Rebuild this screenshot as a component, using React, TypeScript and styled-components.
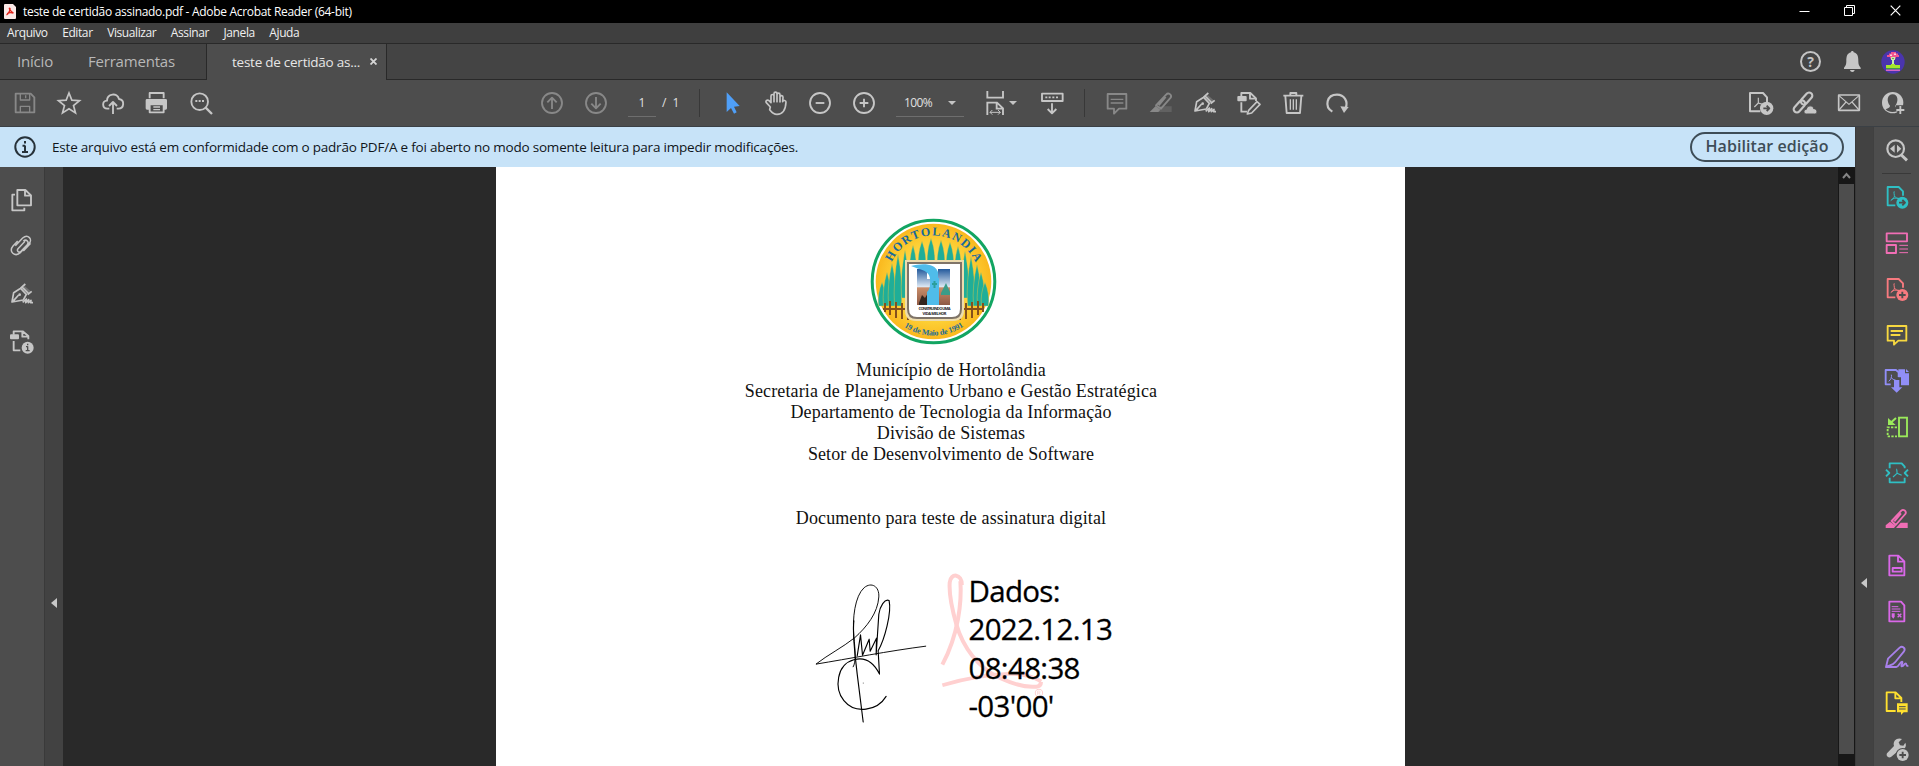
import React from 'react';
import styled, { createGlobalStyle } from 'styled-components';

const GlobalStyle = createGlobalStyle`
  * { box-sizing: border-box; }
  body { margin: 0; background: #292929; font-family: 'Open Sans', 'Noto Sans', sans-serif; }
`;

/* ---------- icons, all drawn on a 72-unit grid ---------- */

const Glyph = styled.svg<{ $color?: string }>`
  display: block;
  flex: none;
  width: 24px;
  height: 24px;
  color: ${(p) => p.$color ?? '#c6c6c6'};
  fill: none;
  stroke: currentColor;
  stroke-width: 5.600;
  stroke-linejoin: round;
  overflow: visible;
`;

const solid = { fill: 'currentColor', stroke: 'none' } as const;
const PANEL = '#4d4d4d';

const PdfMark = () => (
  <path d="M28 19c-3 0 1 12 0 16-2 5-6 9-11 12M28 33c4 5 8 8 14 8M19 44c6-4 13-6 23-4" strokeWidth="3" />
);

const icons: Record<string, React.ReactNode> = {
  save: (
    <>
      <path d="M8 8h45l11 11v45H8z" />
      <path d="M22 8v19h28V8M38 13v9M22 64V46h28v18" strokeWidth="4" />
    </>
  ),
  star: <path d="M36 6l8.500 21.500 23 1.500-18 14.500 6 22.500L36 53.500 16.500 66l6-22.500-18-14.500 23-1.500z" strokeLinejoin="miter" strokeWidth="5" />,
  cloud: (
    <>
      <path d="M25 53h-6c-16-1-17-23-1-24 0-21 31-26 36-5 18 3 16 28-2 29h-5" />
      <path d="M36 69V35M24 45l12-12 12 12" />
    </>
  ),
  print: (
    <g transform="translate(-2 0)">
      <path d="M16 22V6h42v16" />
      <path d="M8 24h56q4 0 4 4v24q0 4-4 4h-5V42H15v14H8q-4 0-4-4V28q0-4 4-4z" {...solid} />
      <path d="M16 40h42v24H16z" />
      <path d="M27 48h20M27 56h20" strokeWidth="4" />
    </g>
  ),
  find: (
    <>
      <circle cx="32" cy="32" r="25" />
      <path d="M50 50l19 19" strokeWidth="7" />
      <path d="M19 30h6M29 30h6M39 30h6" strokeWidth="6" />
    </>
  ),
  up: (
    <>
      <circle cx="36" cy="36" r="30" />
      <path d="M36 54V21M22 34l14-14 14 14" />
    </>
  ),
  down: (
    <>
      <circle cx="36" cy="36" r="30" />
      <path d="M36 18v33M22 38l14 14 14-14" />
    </>
  ),
  cursor: <path d="M20 4v59l13-12 9 17 8-4-8-17 17-2z" {...solid} />,
  hand: <path d="M19 48L7 35c-4-5 3-10 8-6l6 6V15c0-6 9-6 9 0v17V8c0-6 9-6 9 0v24-21c0-6 9-6 9 0v22-15c1-6 9-5 9 1l-1 13c1-5 10-5 10 1-1 22-7 37-27 37-12 0-16-6-22-14z" strokeWidth="5" />,
  minus: (
    <>
      <circle cx="36" cy="36" r="30" />
      <path d="M23 36h26" />
    </>
  ),
  plus: (
    <>
      <circle cx="36" cy="36" r="30" />
      <path d="M23 36h26M36 23v26" />
    </>
  ),
  fit: (
    <g strokeLinejoin="miter">
      <path d="M13 0v20h47V0M13 72V35h29l18 17v20M41 35v18h18" />
      <path d="M21 64h31M28 57l-7 7 7 7M45 57l7 7-7 7" strokeWidth="3" />
    </g>
  ),
  keys: (
    <>
      <rect x="6" y="8" width="62" height="22" />
      <path d="M16 19h6M26 19h6M37 19h6M48 19h6" />
      <path d="M36 37v30M23 54l13 13 13-13" />
    </>
  ),
  comment: (
    <>
      <path d="M8 9h56v44H42L27 68V53H8z" />
      <path d="M17 25h38M17 36h38" strokeWidth="4" />
    </>
  ),
  marker: (
    <>
      <path d="M26 46h42v17H12z" {...solid} opacity=".35" />
      <path d="M21 43L52 10c6-7 18 2 13 10L36 53zM50 18L29 43" />
      <path d="M20 45l14 11-6 7H2z" {...solid} />
    </>
  ),
  pen: (
    <>
      <path d="M6 60l5-28 21-13 17 18-9 17zM8 59l18-20M35 14l22 22M31 19l15-13M53 38l12-10" strokeWidth="5" />
      <path d="M44 12l18 16-7 8-16-18z" {...solid} opacity=".3" />
      <circle cx="29" cy="38" r="4" {...solid} />
      <path d="M38 61l11-10-2 11 9-9-1 9 8-7-1 7h7" strokeWidth="5" />
    </>
  ),
  editDoc: (
    <>
      <path d="M13 17V6h27l17 16v8M39 7v16h17M13 34v28h17" />
      <rect x="1" y="15" width="28" height="16" rx="3" {...solid} />
      <path d="M35 58l25-26 9 8-25 26-13 3z" strokeWidth="5" />
    </>
  ),
  trash: (
    <g transform="translate(1 0)">
      <path d="M6 14h60M27 13V6h18v7M12 15l4 51h40l4-51" />
      <path d="M27 25v31M36 25v31M45 25v31" strokeWidth="4" />
    </g>
  ),
  rotate: (
    <>
      <path d="M22 62C-3 47 5 11 36 11c22 0 34 20 26 40" strokeWidth="6.500" />
      <path d="M46 46l25 2-14 18z" {...solid} />
    </>
  ),
  exportGray: (
    <>
      <path d="M34 61H3V6h39l12 13v15" strokeWidth="6" />
      <path d="M28 20v16L16 48M28 36l15 5" strokeWidth="3.500" />
      <circle cx="53" cy="52" r="20" {...solid} />
      <path d="M43 52h16M53 44l8 8-8 8" stroke={PANEL} />
    </>
  ),
  link: (
    <>
      <g transform="rotate(-48 31 34)" strokeWidth="6.500">
        <rect x="-7" y="24" width="42" height="19" rx="9.500" />
        <rect x="25" y="24" width="42" height="19" rx="9.500" />
      </g>
      <path d="M40 69c-9 0-10-13 0-14 2-13 20-14 22-2 12 0 13 16 3 16z" fill="currentColor" stroke={PANEL} strokeWidth="3" />
    </>
  ),
  mail: (
    <>
      <rect x="5" y="12" width="62" height="46" strokeWidth="5" />
      <path d="M6 14l30 26 30-26M6 57l21-24M66 57L45 33" strokeWidth="3.500" />
    </>
  ),
  addUser: (
    <>
      <circle cx="35" cy="35" r="32" {...solid} />
      <path d="M35 10c17 0 18 22 8 34 0 6 5 7 12 11-9 11-32 11-41 0 8-4 13-5 13-11C16 32 18 10 35 10z" fill={PANEL} stroke="none" />
      <path d="M45 43h27v29H49V61H38V51h7z" fill={PANEL} stroke="none" />
      <path d="M46 57h24M58 45v24" />
    </>
  ),
  bell: <path d="M33 7c0-5 8-5 8 0 12 3 14 13 14 27 0 9 2 14 7 19v4H12v-4c5-5 7-10 7-19C19 20 21 10 33 7zM30 60h14c-1 8-13 8-14 0z" {...solid} />,
  zoomSide: (
    <>
      <circle cx="32" cy="32" r="25" strokeWidth="6.500" />
      <path d="M49 51l17 16" strokeWidth="9" />
      <path d="M29 20v24L15 32zM36 20v24l13-12z" {...solid} />
    </>
  ),
  exportPdf: (
    <>
      <path d="M31 61H8V6h33l13 13v13" />
      <PdfMark />
      <circle cx="52" cy="53" r="18" {...solid} />
      <path d="M42 53h17M52 45l8 8-8 8" stroke={PANEL} />
    </>
  ),
  editPdf: (
    <>
      <rect x="5" y="7" width="61" height="24" />
      <rect x="5" y="42" width="28" height="24" />
      <path d="M43 43h26M43 54h26M43 65h26" strokeWidth="3" />
    </>
  ),
  createPdf: (
    <>
      <path d="M31 61H8V6h33l13 13v13" />
      <PdfMark />
      <circle cx="52" cy="54" r="18" {...solid} />
      <path d="M42 54h20M52 44v20" stroke={PANEL} />
    </>
  ),
  note: (
    <>
      <path d="M8 9h56v44H40L27 65V53H8z" />
      <path d="M17 24h37M17 36h29" />
    </>
  ),
  combine: (
    <>
      <path d="M17 46H2V3h31l8 7v14" />
      <path d="M11 37c7-5 10-13 8-20M19 26c4 5 7 7 12 6" strokeWidth="3" />
      <path d="M40 1h20v12h12v36H48V25h-8z" {...solid} />
      <path d="M63 0l9 9h-9z" {...solid} />
      <path d="M27 33h16v22h9L35 71 18 55h9z" {...solid} />
    </>
  ),
  organize: (
    <g strokeLinejoin="miter">
      <rect x="42" y="8" width="24" height="56" />
      <path d="M36 37H8v27h28" strokeDasharray="7 4" />
      <path d="M33 9L17 23" strokeWidth="6" />
      <path d="M9 9v21h23z" {...solid} />
    </g>
  ),
  compress: (
    <>
      <path d="M14 22V7h36l9 10v5M14 50v14h45V50" />
      <path d="M3 26l10 10L3 46M69 26L59 36l10 10" />
      <path d="M36 24c-2 0 1 10 0 13l-12 11M36 37l14 6" strokeWidth="3.500" />
    </>
  ),
  highlight: (
    <>
      <path d="M33 63l14-16h21v16z" {...solid} />
      <path d="M20 42L49 11c6-6 17 2 12 10L32 54zM48 19L28 43" />
      <path d="M15 44l17 13-5 6H2v-8z" {...solid} />
    </>
  ),
  form: (
    <>
      <path d="M13 8h27l18 17v42H13zM39 9v17h18" />
      <rect x="23" y="45" width="27" height="11" />
    </>
  ),
  request: (
    <>
      <path d="M13 8h35l10 11v48H13z" />
      <path d="M20 23h20M20 30h26M20 37h26" strokeWidth="3" />
      <path d="M20 43h9v10l-4 6-5-6z" {...solid} />
      <path d="M38 44l11 11M49 44L38 55" strokeWidth="4" />
    </>
  ),
  sign: (
    <path d="M3 66l6-25L44 8c8-7 19 2 13 11L31 51c-6 9-18 10-28 15zM4 66h30c7 0 12-17 17-16 5 1-6 14 0 14s6-9 11-9c4 0-1 8 8 8" />
  ),
  sendComment: (
    <>
      <path d="M32 60H5V4h27l17 17v12M31 5v17h17" />
      <path d="M36 37h32v27H56l-8 8v-8H36z" {...solid} />
      <path d="M42 47h20M42 54h20" stroke={PANEL} strokeWidth="3" />
    </>
  ),
  moreTools: (
    <>
      <path d="M6 49l21-22C22 10 38 0 51 6L41 16l4 9 10 1 6-9c6 13-5 24-18 22L18 60C10 65 2 56 6 49z" {...solid} />
      <circle cx="53" cy="54" r="21" fill={PANEL} stroke="none" />
      <circle cx="53" cy="54" r="18" {...solid} />
      <path d="M43 54h20M53 44v20" stroke={PANEL} />
    </>
  ),
  pages: (
    <>
      <path d="M22 6h24l17 16v30H22zM45 7v16h17" />
      <path d="M15 20H7v47h36v-8" />
    </>
  ),
  clip: <path transform="translate(-1 -5)" d="M17 37l22-23c16-14 32 5 18 18L33 57C16 73-5 55 10 38l14-15M41 53l22-23M46 24L25 46c-5 8 3 13 9 8l18-19c8-9-2-19-11-12" strokeWidth="4.500" />,
  docInfo: (
    <>
      <path d="M11 14V4h27l17 14v10M37 5v15h17M11 33v28h20" />
      <rect x="0" y="13" width="27" height="15" rx="3" {...solid} />
      <circle cx="53" cy="53" r="18" {...solid} />
      <path d="M53 49v13M48 50h5M47 62h12M53 41v5" stroke={PANEL} strokeWidth="4" />
    </>
  ),
};

const Icon = ({ name, color }: { name: string; color?: string }) => (
  <Glyph viewBox="0 0 72 72" $color={color} aria-hidden="true">
    {icons[name]}
  </Glyph>
);

/* ---------- window chrome ---------- */

const Window = styled.div`
  display: flex;
  flex-direction: column;
  width: 1919px;
  height: 766px;
  overflow: hidden;
  background: #292929;
`;

const TitleBar = styled.header`
  display: flex;
  align-items: center;
  height: 23px;
  flex: none;
  padding-left: 4px;
  background: #000;
  color: #fff;
`;

const Title = styled.h1`
  margin: 1px 0 0 7px;
  font-size: 12px;
  font-weight: 400;
  line-height: 18px;
  letter-spacing: -0.3px;
`;

const WindowControls = styled.div`
  display: flex;
  margin-left: auto;
  margin-bottom: 3px;
  padding-right: 1px;
`;

const WindowButton = styled.div`
  display: flex;
  justify-content: center;
  width: 45.500px;
`;

const WindowGlyph = styled.svg`
  display: block;
  width: 11px;
  height: 11px;
  fill: none;
  stroke: #fff;
`;

const MenuBar = styled.nav`
  display: flex;
  flex: none;
  gap: 14.500px;
  height: 21px;
  padding: 1px 0 0 7px;
  border-bottom: 1px solid #292929;
  background: #3f3f3f;
  color: #f0f0f0;
  font-size: 12px;
  line-height: 18px;
  letter-spacing: -0.4px;
`;

const TabBar = styled.div`
  display: flex;
  flex: none;
  height: 36px;
  background: #444;
`;

const Tabs = styled.div`
  display: flex;
  gap: 35px;
  width: 207px;
  padding: 6px 0 0 17px;
  border-right: 1px solid #292929;
  border-bottom: 1px solid #292929;
  color: #b8b8b8;
  font-size: 15px;
  line-height: 22px;
  letter-spacing: -0.2px;
`;

const ActiveTab = styled.div`
  display: flex;
  width: 180px;
  padding: 8px 0 0 25px;
  border-right: 1px solid #292929;
  background: ${PANEL};
  color: #e6e6e6;
  font-size: 13.500px;
  line-height: 21px;
  letter-spacing: -0.25px;
`;

const TabClose = styled.svg`
  width: 7px;
  height: 7px;
  margin: 6px 0 0 10px;
  stroke: #d4d4d4;
  stroke-width: 1.800;
`;

const Account = styled.div`
  display: flex;
  flex: 1;
  align-items: center;
  justify-content: flex-end;
  gap: 17px;
  padding: 0 14px 0 0;
  border-bottom: 1px solid #292929;
`;

const Help = styled.span`
  display: flex;
  align-items: center;
  justify-content: center;
  width: 21px;
  height: 21px;
  margin-right: 2px;
  border: 2px solid #c4c4c4;
  border-radius: 50%;
  color: #c4c4c4;
  font-size: 14px;
  font-weight: 700;
  line-height: 17px;
`;

const ToolBar = styled.div`
  display: flex;
  flex: none;
  align-items: center;
  height: 47px;
  padding: 0 4px 0 3px;
  border-bottom: 1px solid #3b4045;
  background: ${PANEL};
  color: #e0e0e0;
  font-size: 12px;
`;

const ToolGroup = styled.div<{ $left?: number; $push?: boolean }>`
  display: flex;
  align-items: center;
  margin-left: ${(p) => (p.$push ? 'auto' : `${p.$left ?? 0}px`)};
`;

const ToolButton = styled.div<{ $drop?: boolean }>`
  display: flex;
  align-items: center;
  justify-content: ${(p) => (p.$drop ? 'flex-start' : 'center')};
  gap: 2px;
  width: ${(p) => (p.$drop ? 57 : 44)}px;
  padding-left: ${(p) => (p.$drop ? 10 : 0)}px;
  height: 44px;
`;

const Divider = styled.i`
  width: 1px;
  height: 28px;
  background: #383838;
`;

const PageField = styled.div`
  width: 28px;
  margin-left: 10px;
  height: 28px;
  border-bottom: 1px solid #6e6e6e;
  line-height: 27px;
  text-align: center;
`;

const PageTotal = styled.span`
  width: 37px;
  margin-left: 6px;
  word-spacing: 3px;
  line-height: 26px;
`;

const ZoomField = styled.div`
  display: flex;
  align-items: center;
  justify-content: space-between;
  width: 68px;
  height: 28px;
  margin: 0 9px 0 10px;
  padding: 0 8px;
  border-bottom: 1px solid #6e6e6e;
  letter-spacing: -0.6px;
`;

const Caret = styled.i`
  border: 4px solid transparent;
  border-top-color: #c4c4c4;
  border-bottom: 0;
`;

/* ---------- body ---------- */

const Body = styled.div`
  display: flex;
  flex: 1;
  min-height: 0;
`;

const Main = styled.div`
  display: flex;
  flex-direction: column;
  width: 1855px;
`;

const Notice = styled.div`
  display: flex;
  align-items: center;
  flex: none;
  height: 40px;
  padding: 0 11px 0 14px;
  background: #c7e3f8;
  color: #10151a;
`;

const NoticeText = styled.p`
  flex: 1;
  margin: 0 0 1px 16px;
  font-size: 13.500px;
  letter-spacing: -0.204px;
`;

const InfoGlyph = styled.svg`
  width: 22px;
  height: 22px;
  fill: none;
  stroke: #27323a;
  stroke-width: 2;
`;

const EnableButton = styled.button`
  width: 154px;
  height: 30px;
  padding: 0 0 2px;
  border: 2px solid #3e4d57;
  border-radius: 15px;
  background: transparent;
  color: #3e4d57;
  font: 600 16px/24px 'Open Sans', sans-serif;
  letter-spacing: 0.07px;
`;

const Workspace = styled.div`
  display: flex;
  flex: 1;
  min-height: 0;
`;

const LeftRail = styled.aside`
  width: 44px;
  padding-top: 9px;
  background: ${PANEL};
`;

const RailButton = styled.div`
  display: flex;
  align-items: center;
  justify-content: center;
  height: 47.300px;
`;

const Strip = styled.div<{ $width: number; $top: number }>`
  display: flex;
  align-items: flex-start;
  justify-content: center;
  width: ${(p) => p.$width}px;
  padding-top: ${(p) => p.$top}px;
  padding-right: 1px;
  border-left: 1px solid #3a3a3a;
  background: #424242;
`;

const Collapse = styled.i`
  border: 5.500px solid transparent;
  border-right: 6px solid #c8c8c8;
  border-left: 0;
`;

const Canvas = styled.main`
  display: flex;
  justify-content: center;
  flex: 1;
  overflow: hidden;
  background: #292929;
`;

const ScrollBar = styled.div`
  display: flex;
  flex-direction: column;
  width: 17px;
  padding: 0 1px;
  background: #171717;
`;

const ScrollUp = styled.svg`
  flex: none;
  width: 15px;
  height: 17px;
  fill: none;
  stroke: #858585;
  stroke-width: 2;
`;

const Thumb = styled.div`
  height: 570px;
  background: ${PANEL};
`;

const ToolRail = styled.aside`
  width: 46px;
  border-left: 1px solid #404040;
  background: ${PANEL};
`;

const RailTool = styled.div`
  display: flex;
  align-items: center;
  justify-content: center;
  height: 46px;
`;

const RailRule = styled.i`
  display: block;
  width: 29px;
  height: 1px;
  margin-left: 8px;
  background: #393939;
`;

/* ---------- document ---------- */

const Page = styled.article`
  flex: none;
  width: 909px;
  height: 640px;
  margin-left: -1px;
  padding-top: 51px;
  background: #fff;
  color: #111;
`;

const Seal = styled.svg`
  display: block;
  width: 127px;
  height: 127px;
  margin-left: 374px;
`;

const Heading = styled.div`
  margin-top: 15px;
  padding-left: 2px;
  font: 18px/21px 'Liberation Serif', serif;
  letter-spacing: 0.12px;
  text-align: center;
`;

const Subject = styled(Heading)`
  margin-top: 43px;
`;

const SignatureRow = styled.section`
  display: flex;
  align-items: flex-start;
  margin-top: 43px;
  padding-left: 317px;
`;

const Scribble = styled.svg`
  width: 117px;
  height: 143px;
  margin-top: 9px;
  fill: none;
  stroke: #000;
  stroke-width: 3.400;
  stroke-linejoin: round;
  stroke-linecap: round;
`;

const Stamp = styled.div`
  position: relative;
  margin-left: 10px;
  padding-left: 29px;
  color: #000;
  font-size: 29.500px;
  line-height: 38.400px;
  letter-spacing: -0.68px;
`;

const Watermark = styled.svg`
  position: absolute;
  top: 0;
  left: 0;
  width: 107px;
  height: 127px;
`;

const StampText = styled.div`
  position: relative;
  -webkit-text-stroke: 0.3px #000;
`;

/* x, base and top of each cypress behind the shield */
const trees = [
  [12, 88, 64], [17, 88, 54], [22, 88, 45], [28, 88, 36], [35, 80, 32], [43, 62, 27], [52, 50, 23], [61, 48, 20],
  [71, 50, 22], [80, 52, 24], [88, 62, 28], [95, 80, 33], [101, 88, 38], [107, 88, 46], [111, 88, 54], [115, 88, 64],
];

const SealDrawing = () => (
  <Seal viewBox="0 0 127 127">
    <defs>
      <radialGradient id="gold">
        <stop offset="0" stopColor="#ffe79a" />
        <stop offset=".7" stopColor="#fdcf35" />
        <stop offset="1" stopColor="#fab81e" />
      </radialGradient>
      <linearGradient id="sky" x2="0" y2="1">
        <stop offset="0" stopColor="#245a9c" />
        <stop offset=".5" stopColor="#dfeaf5" />
        <stop offset=".52" stopColor="#c98d6a" />
        <stop offset="1" stopColor="#8f5a44" />
      </linearGradient>
      <path id="arcTop" d="M17.500 63.500a46 46 0 0 1 92 0" />
      <path id="arcBottom" d="M9.500 63.500a54 54 0 0 0 108 0" />
    </defs>
    <circle cx="63.500" cy="63.500" r="61.300" fill="#fff" stroke="#12a562" strokeWidth="3" />
    <circle cx="63.500" cy="63.500" r="57.800" fill="url(#gold)" />
    {trees.map(([x, base, top], i) => (
      <path
        key={i}
        d={`M${x} ${top}Q${x + 5} ${top + (base - top) * 0.5} ${x + 3.500} ${base}H${x - 3.500}Q${x - 5} ${top + (base - top) * 0.5} ${x} ${top}z`}
        fill="#1fae98"
        stroke="#fccb3a"
        strokeWidth=".4"
      />
    ))}
    <path d="M15 85v9M20 83v14M26 84v16M32 85v16M38 88v14M90 88v14M96 85v16M102 84v16M108 83v14M113 85v9M13 91h26M89 91h25" stroke="#85501c" strokeWidth="2" />
    <path d="M35 42h59v50q0 11-11 11H46q-11 0-11-11z" fill="#eddcae" />
    <path d="M38 45h53v46q0 9-9 9H47q-9 0-9-9z" fill="#fff" stroke="#7f7468" strokeWidth="2" />
    <rect x="47" y="51" width="33" height="36" fill="url(#sky)" />
    <path d="M49 85l3-8 3 3 3-5 1 12H49z" fill="#33251f" />
    <path d="M71 75l5-10 4 9v3h-9z" fill="#3b9c88" />
    <path d="M57 51h11v10H57z" fill="#fff" />
    <path d="M41 48c11-3 24-3 27 6v7h-8c0-6-6-9-11-10z" fill="#4fbcea" />
    <path d="M60 60h9v27H57V74q4-3 3-14z" fill="#4fbcea" />
    <path d="M62 66h5M64.500 63v7" stroke="#2c9e9b" strokeWidth="2" />
    <text x="64.500" y="92" fontSize="4" fontWeight="700" textAnchor="middle" textLength="32" fill="#222">CONSTRUINDO UMA</text>
    <text x="64.500" y="96.500" fontSize="4" fontWeight="700" textAnchor="middle" textLength="24" fill="#222">VIDA MELHOR</text>
    <text fontFamily="Liberation Serif, serif" fontSize="12" fontWeight="700" fill="#176a9c">
      <textPath href="#arcTop" startOffset="20" textLength="105">HORTOLANDIA</textPath>
    </text>
    <text fontFamily="Liberation Serif, serif" fontSize="8" fontWeight="700" fill="#176a9c">
      <textPath href="#arcBottom" startOffset="53.500" textLength="63">19 de Maio de 1991</textPath>
    </text>
  </Seal>
);

const leftTools = ['pages', 'clip', 'pen', 'docInfo'];

const sideTools: [string, string][] = [
  ['exportPdf', '#2fbfc4'],
  ['editPdf', '#f06eb5'],
  ['createPdf', '#f77a7f'],
  ['note', '#f7d840'],
  ['combine', '#918ef7'],
  ['organize', '#9bea5b'],
  ['compress', '#2fbfc4'],
  ['highlight', '#f06eb5'],
  ['form', '#d968e8'],
  ['request', '#d968e8'],
  ['sign', '#a880ea'],
  ['sendComment', '#ffe02f'],
  ['moreTools', '#c4c4c4'],
];

const DIM = '#888888';

export default function App() {
  return (
    <Window>
      <GlobalStyle />
      <TitleBar>
        <svg width="12" height="15" viewBox="0 0 12 15">
          <path d="M1 0h8l3 3v11q0 1-1 1H1q-1 0-1-1V1q0-1 1-1z" fill="#fbe9e7" />
          <path d="M5.600 4c-1 0 .8 3.500 3.900 5M6 4c.5 2-1.500 6-3.500 7M3 9.500c2-1 5-1 6.500-.3" fill="none" stroke="#e2231a" strokeWidth="1.300" />
        </svg>
        <Title>teste de certidão assinado.pdf - Adobe Acrobat Reader (64-bit)</Title>
        <WindowControls>
          <WindowButton>
            <WindowGlyph viewBox="0 0 11 11"><path d="M.5 6.500h10" /></WindowGlyph>
          </WindowButton>
          <WindowButton>
            <WindowGlyph viewBox="0 0 11 11"><path d="M.5 2.500h8v8h-8zM2.500 2V.5h8v8H9" /></WindowGlyph>
          </WindowButton>
          <WindowButton>
            <WindowGlyph viewBox="0 0 11 11"><path d="M.7.7l9.600 9.600M10.300.7L.7 10.300" strokeWidth="1.200" /></WindowGlyph>
          </WindowButton>
        </WindowControls>
      </TitleBar>
      <MenuBar>
        <span>Arquivo</span>
        <span>Editar</span>
        <span>Visualizar</span>
        <span>Assinar</span>
        <span>Janela</span>
        <span>Ajuda</span>
      </MenuBar>
      <TabBar>
        <Tabs>
          <span>Início</span>
          <span>Ferramentas</span>
        </Tabs>
        <ActiveTab>
          <span>teste de certidão as...</span>
          <TabClose viewBox="0 0 7 7"><path d="M.5.5l6 6M6.500.5l-6 6" /></TabClose>
        </ActiveTab>
        <Account>
          <Help>?</Help>
          <Icon name="bell" />
          <svg width="24" height="24" viewBox="0 0 24 24">
            <circle cx="12" cy="12" r="11.700" fill="#4a35ad" />
            <path d="M6 7V5h2V3.500h2V2h5v1.500h2V5h1v2h-3v1.500H9V7z" fill="#f2558f" />
            <path d="M9 4.500h2V6H9zM13 3.500h2V5h-2z" fill="#ffd0dc" />
            <path d="M10 7h4v3h-1v5h-2v-5h-1z" fill="#c8f0a8" />
            <path d="M11.500 8h1v1h-1z" fill="#333" />
            <path d="M5 15h5v-1h4v1h5v3H5z" fill="#a4e62b" />
            <path d="M5 18h14v1.500H5z" fill="#3d9a4a" />
            <path d="M5 19.500h14v1.500H5z" fill="#d566c4" />
          </svg>
        </Account>
      </TabBar>
      <ToolBar>
        <ToolGroup>
          <ToolButton><Icon name="save" color={DIM} /></ToolButton>
          <ToolButton><Icon name="star" /></ToolButton>
          <ToolButton><Icon name="cloud" /></ToolButton>
          <ToolButton><Icon name="print" /></ToolButton>
          <ToolButton><Icon name="find" /></ToolButton>
        </ToolGroup>
        <ToolGroup $left={307}>
          <ToolButton><Icon name="up" color={DIM} /></ToolButton>
          <ToolButton><Icon name="down" color={DIM} /></ToolButton>
          <PageField>1</PageField>
          <PageTotal>/ 1</PageTotal>
        </ToolGroup>
        <Divider />
        <ToolGroup $left={10}>
          <ToolButton><Icon name="cursor" color="#4f9ff8" /></ToolButton>
          <ToolButton><Icon name="hand" /></ToolButton>
          <ToolButton><Icon name="minus" /></ToolButton>
          <ToolButton><Icon name="plus" /></ToolButton>
          <ZoomField>
            100%
            <Caret />
          </ZoomField>
          <ToolButton $drop>
            <Icon name="fit" />
            <Caret />
          </ToolButton>
          <ToolButton><Icon name="keys" /></ToolButton>
        </ToolGroup>
        <ToolGroup $left={10}>
          <Divider />
        </ToolGroup>
        <ToolGroup $left={10}>
          <ToolButton><Icon name="comment" color={DIM} /></ToolButton>
          <ToolButton><Icon name="marker" color={DIM} /></ToolButton>
          <ToolButton><Icon name="pen" /></ToolButton>
          <ToolButton><Icon name="editDoc" /></ToolButton>
          <ToolButton><Icon name="trash" /></ToolButton>
          <ToolButton><Icon name="rotate" /></ToolButton>
        </ToolGroup>
        <ToolGroup $push>
          <ToolButton><Icon name="exportGray" /></ToolButton>
          <ToolButton><Icon name="link" /></ToolButton>
          <ToolButton><Icon name="mail" /></ToolButton>
          <ToolButton><Icon name="addUser" /></ToolButton>
        </ToolGroup>
      </ToolBar>
      <Body>
        <Main>
          <Notice>
            <InfoGlyph viewBox="0 0 22 22">
              <circle cx="11" cy="11" r="9.700" />
              <path d="M11 9.500V16M8.500 9.700H11M8 16h6M11 5v2.500" />
            </InfoGlyph>
            <NoticeText>
              Este arquivo está em conformidade com o padrão PDF/A e foi aberto no modo somente leitura para impedir modificações.
            </NoticeText>
            <EnableButton>Habilitar edição</EnableButton>
          </Notice>
          <Workspace>
            <LeftRail>
              {leftTools.map((name) => (
                <RailButton key={name}><Icon name={name} /></RailButton>
              ))}
            </LeftRail>
            <Strip $width={19} $top={431}><Collapse /></Strip>
            <Canvas>
              <Page>
                <SealDrawing />
                <Heading>
                  Município de Hortolândia
                  <br />
                  Secretaria de Planejamento Urbano e Gestão Estratégica
                  <br />
                  Departamento de Tecnologia da Informação
                  <br />
                  Divisão de Sistemas
                  <br />
                  Setor de Desenvolvimento de Software
                </Heading>
                <Subject>Documento para teste de assinatura digital</Subject>
                <SignatureRow>
                  <Scribble viewBox="100 60 350 430">
                    <path d="M220 318c9-14 6-50 2-91-5-55 3-122 31-147 22-18 46-4 44 28-3 48-36 90-73 123-35 28-82 52-116 79 97-16 221-40 330-54" strokeWidth="2.800" />
                    <path d="M222 180c-5 42 3 96 10 160l18 144" />
                    <path d="M232 285l10-63 6 61 20-48 3 36 19-39-1 50 8-122c3-24 18-48 31-41 8 37-14 118-33 151l4 70c-14-28-38-54-77-43-52 14-60 85-30 123 34 42 101 30 127-13" />
                    <path d="M250 367h1" strokeWidth="1.500" />
                  </Scribble>
                  <Stamp>
                    <Watermark viewBox="480 35 320 380">
                      <path
                        d="M546 50v38c-2 40-6 80-11 108 18 58 50 104 96 140 56-5 116-4 150 22 6 12-4 22-16 22-38 1-90-10-136-34-50 5-96 14-142 32v-8c24-10 45-18 64-22-9-6-14-58-23-128-8 32-22 62-41 92v-40c16-26 29-52 35-82-10-40-22-90-20-128 1-24 30-32 44-12zM531 62c-10-8-17-1-17 12 0 30 6 62 15 92 6-34 10-78 2-104zM531 212c-5 50-14 88-22 122 24 4 60 5 98 2-36-34-60-76-76-124z"
                        fill="none"
                      />
                      <path d="M545 74c1-34-33-38-36-8-3 40 8 84 20 126 20 70 66 128 126 158 40 19 85 31 113 28 10-1 14-5 14-14" fill="none" stroke="#ffd0d0" strokeWidth="12" />
                      <path d="M541 62c4 60-5 158-54 250" fill="none" stroke="#ffd0d0" strokeWidth="12" />
                      <path d="M487 374c60-18 130-32 200-34 44-1 75 10 96 22" fill="none" stroke="#ffd0d0" strokeWidth="11" />
                      <circle cx="776" cy="397" r="11" fill="none" stroke="#ffd0d0" strokeWidth="3" />
                      <path d="M772 403v-12h6q3 3 0 6h-6M776 397l4 6" fill="none" stroke="#ffd0d0" strokeWidth="2" />
                    </Watermark>
                    <StampText>
                      Dados:
                      <br />
                      2022.12.13
                      <br />
                      08:48:38
                      <br />
                      -03'00'
                    </StampText>
                  </Stamp>
                </SignatureRow>
              </Page>
            </Canvas>
            <ScrollBar>
              <ScrollUp viewBox="0 0 15 17"><path d="M4 11l3.500-4 3.500 4" /></ScrollUp>
              <Thumb />
            </ScrollBar>
          </Workspace>
        </Main>
        <Strip $width={18} $top={451}><Collapse /></Strip>
        <ToolRail>
          <RailTool><Icon name="zoomSide" /></RailTool>
          <RailRule />
          {sideTools.map(([name, color]) => (
            <RailTool key={name}><Icon name={name} color={color} /></RailTool>
          ))}
        </ToolRail>
      </Body>
    </Window>
  );
}
